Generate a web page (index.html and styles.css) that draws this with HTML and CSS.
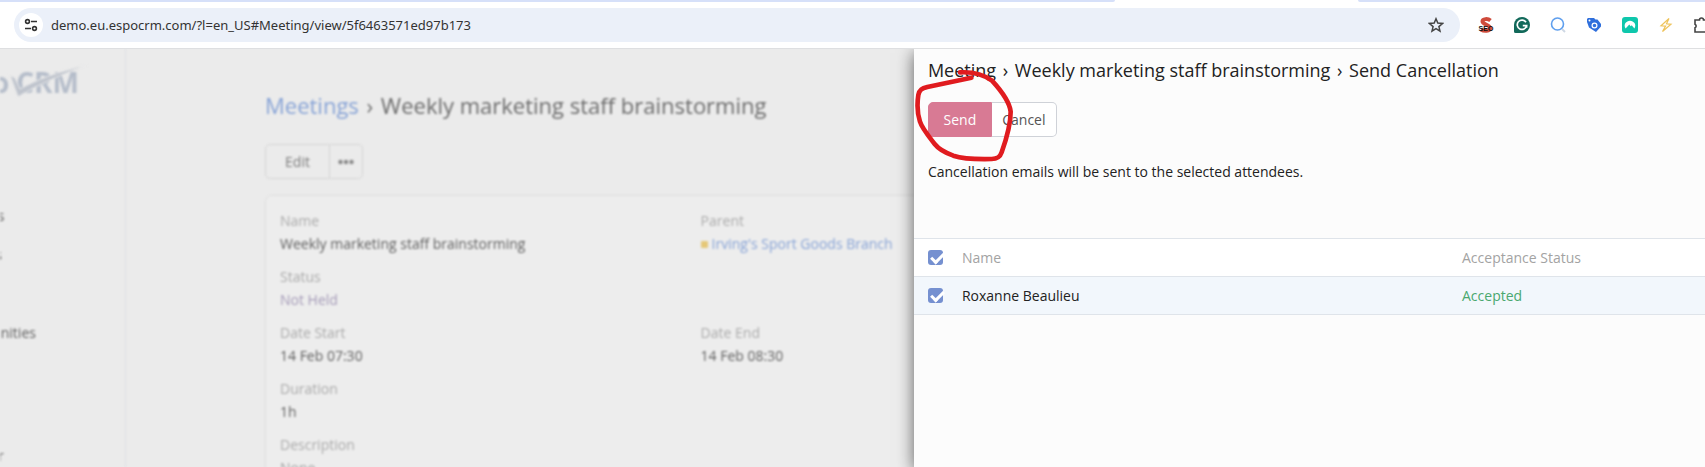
FILE: index.html
```html
<!DOCTYPE html>
<html lang="en">
<head>
    <meta charset="UTF-8">
    <meta name="viewport" content="width=device-width, initial-scale=1.0">
    <title>Weekly marketing staff brainstorming</title>
    <link rel="stylesheet" href="styles.css">
</head>
<body>
<div class="tab-strip">
    <div class="tab-before"></div>
    <div class="tab-active"></div>
    <div class="tab-after"></div>
</div>
<header class="toolbar">
    <div class="address-bar">
        <button class="site-info" type="button" aria-label="Site information">
            <svg width="14" height="14" viewBox="0 0 14 14" fill="none" stroke="#333" stroke-width="1.6">
                <circle cx="3.5" cy="3.5" r="1.9"/>
                <path d="M7 3.5h6M1 10.5h6"/>
                <circle cx="10.5" cy="10.5" r="1.9"/>
            </svg>
        </button>
        <input class="url" type="text" aria-label="Address" value="demo.eu.espocrm.com/?l=en_US#Meeting/view/5f6463571ed97b173">
        <button class="tool" type="button" aria-label="Bookmark">
            <svg width="16" height="16" viewBox="0 0 16 16" fill="none" stroke="#444" stroke-width="1.5">
                <path d="M8 1.8l1.8 4.3 4.7.4-3.6 3.1 1.1 4.6L8 11.7l-4 2.5 1.1-4.6L1.5 6.5l4.7-.4z"/>
            </svg>
        </button>
    </div>
    <div class="extensions">
        <button class="tool seo" type="button" aria-label="SEO">
            <svg class="seo-s" width="16" height="16" viewBox="0 0 16 16" fill="none" stroke="#cf4b3b" stroke-width="4">
                <path d="M12.500 3.500C10 1.500 4.500 1.500 4.500 4.500S12 7.500 12 11 6 14.500 3 12.500"/>
            </svg>
            <span class="seo-text">SEO</span>
        </button>
        <button class="tool" type="button" aria-label="Grammar">
            <svg width="16" height="16" viewBox="0 0 16 16">
                <path d="M8 0a8 8 0 0 1 0 16H1.5Q0 16 0 14.5V8a8 8 0 0 1 8-8z" fill="#12695a"/>
                <path d="M12 5.300A4.700 4.700 0 1 0 12.600 8.600H8.800M12.600 8.300v2.500" fill="none" stroke="#fff" stroke-width="1.7"/>
            </svg>
        </button>
        <button class="tool" type="button" aria-label="Search">
            <svg width="16" height="16" viewBox="0 0 16 16" fill="none">
                <path d="M12 12l3 3" stroke="#cfd8e4" stroke-width="2"/>
                <circle cx="7.5" cy="7" r="6" stroke="#5f9fee" stroke-width="1.6"/>
            </svg>
        </button>
        <button class="tool" type="button" aria-label="Tags">
            <svg width="16" height="16" viewBox="0 0 16 16">
                <path d="M2 1h6l1.500 1.500h2L15 7v2.500L10 15 3 10.500 1 5V2z" fill="#2f6fdc"/>
                <circle cx="8.500" cy="8.500" r="2.400" fill="none" stroke="#fff" stroke-width="1.200"/>
                <circle cx="3.500" cy="3.500" r="1" fill="#fff"/>
            </svg>
        </button>
        <button class="tool" type="button" aria-label="VPN">
            <svg width="16" height="16" viewBox="0 0 16 16">
                <rect width="16" height="16" rx="3" fill="#0ec7ac"/>
                <path d="M3.600 11.500C1 7.500 4.300 3.800 8 3.800s7 3.700 4.400 7.700l-2.700-3.200-1 .9L7.300 7.500z" fill="#fff"/>
            </svg>
        </button>
        <button class="tool" type="button" aria-label="Speed">
            <svg width="16" height="16" viewBox="0 0 16 16" fill="none" stroke="#eec35a" stroke-width="1.2">
                <path d="M11 1.500L3 8.800l4.600.3L4.500 14.500 13 7.300l-4.500-.5z"/>
            </svg>
        </button>
        <button class="tool" type="button" aria-label="Extensions">
            <svg width="16" height="16" viewBox="0 0 16 16" fill="none" stroke="#444" stroke-width="1.6">
                <path d="M1 3h4.500a2 2 0 0 1 4 0H13v4a2 2 0 0 1 0 4v4H1v-4.200a2 2 0 0 0 0-3.600z"/>
            </svg>
        </button>
    </div>
</header>

<div class="app">
    <div class="page">
        <aside class="sidebar">
            <div class="logo">
                <span>espo</span>
                <span>CRM</span>
                <svg class="logo-check" width="78" height="34" viewBox="0 0 78 34">
                    <path d="M1 10l5 3 5 11C28 14 52 6 78 0 52 10 28 20 9 32z" fill="#bfc4cd" stroke="#ebebeb" stroke-width="1"/>
                </svg>
            </div>
            <nav>
                <ul class="menu">
                    <li><a href="#Account">Accounts</a></li>
                    <li><a href="#Contact">Contacts</a></li>
                    <li><a href="#Lead">Leads</a></li>
                    <li><a href="#Opportunity">Opportunities</a></li>
                    <li><a href="#Case">Cases</a></li>
                    <li><a href="#Email">Emails</a></li>
                </ul>
                <ul class="menu">
                    <li><a href="#Calendar">Calendar</a></li>
                </ul>
            </nav>
        </aside>
        <main class="content">
            <h1 class="page-title"><a href="#Meeting">Meetings</a> <span class="chevron">›</span> Weekly marketing staff brainstorming</h1>
            <div class="btn-group">
                <button class="btn btn-wide" type="button">Edit</button>
                <button class="btn btn-dots" type="button" aria-label="More">
                    <svg width="16" height="6" viewBox="0 0 16 6" fill="#888">
                        <circle cx="2.5" cy="3" r="2.2"/>
                        <circle cx="8" cy="3" r="2.2"/>
                        <circle cx="13.5" cy="3" r="2.2"/>
                    </svg>
                </button>
            </div>
            <dl class="record">
                <div class="field">
                    <dt>Name</dt>
                    <dd>Weekly marketing staff brainstorming</dd>
                </div>
                <div class="field">
                    <dt>Parent</dt>
                    <dd class="parent"><span class="dot"></span><a href="#Account">Irving's Sport Goods Branch</a></dd>
                </div>
                <div class="field field-full">
                    <dt>Status</dt>
                    <dd class="not-held">Not Held</dd>
                </div>
                <div class="field">
                    <dt>Date Start</dt>
                    <dd>14 Feb 07:30</dd>
                </div>
                <div class="field">
                    <dt>Date End</dt>
                    <dd>14 Feb 08:30</dd>
                </div>
                <div class="field field-full">
                    <dt>Duration</dt>
                    <dd>1h</dd>
                </div>
                <div class="field field-full">
                    <dt>Description</dt>
                    <dd class="none">None</dd>
                </div>
            </dl>
        </main>
    </div>

    <section class="modal" role="dialog" aria-labelledby="modal-title">
        <h2 class="modal-title" id="modal-title">Meeting <span class="chevron">›</span> Weekly marketing staff brainstorming <span class="chevron">›</span> Send Cancellation</h2>
        <div class="btn-group modal-buttons">
            <button class="btn btn-danger" type="button">Send</button>
            <button class="btn btn-cancel" type="button">Cancel</button>
        </div>
        <p class="modal-text">Cancellation emails will be sent to the selected attendees.</p>
        <table class="attendees">
            <thead>
                <tr>
                    <th class="col-check"><input type="checkbox" aria-label="Select all" checked></th>
                    <th>Name</th>
                    <th class="col-status">Acceptance Status</th>
                </tr>
            </thead>
            <tbody>
                <tr>
                    <td class="col-check"><input type="checkbox" id="attendee" checked></td>
                    <td><label for="attendee">Roxanne Beaulieu</label></td>
                    <td class="col-status accepted">Accepted</td>
                </tr>
            </tbody>
        </table>
        <svg class="marker" width="104" height="100" viewBox="42 81 312 300">
            <path d="M180 97C215 95 250 103 276 122C298 146 328 180 332 215C332 255 318 300 305 337C300 352 292 357 275 357C235 358 190 357 160 347C135 338 118 330 104 312C88 291 66 265 60 245C50 215 52 185 55 165C58 149 66 145 82 141L214 113"/>
        </svg>
    </section>
</div>
</body>
</html>
```
FILE: styles.css
```css
* {
    box-sizing: border-box;
}

body {
    margin: 0;
    height: 100vh;
    display: flex;
    flex-direction: column;
    overflow: hidden;
    font-family: "Open Sans", "Noto Sans", sans-serif;
    font-size: 14px;
    line-height: 20px;
    color: #222;
    background-color: #fff;
}

a {
    color: inherit;
    text-decoration: none;
}

button {
    font: inherit;
    cursor: pointer;
}

svg {
    display: block;
}

/* Browser bar */
.tab-strip {
    display: flex;
    height: 2px;
}

.tab-before {
    flex: 1115;
    background-color: #d6e0f9;
    border-bottom-right-radius: 2px;
}

.tab-active {
    flex: 243;
}

.tab-after {
    flex: 347;
    background-color: #d6e0f9;
    border-bottom-left-radius: 2px;
}

.toolbar {
    display: flex;
    align-items: center;
    gap: 18px;
    height: 47px;
    padding: 0 0 1px 14px;
    border-bottom: 1px solid #dedfe1;
    overflow: hidden;
}

.address-bar {
    flex: 1;
    display: flex;
    align-items: center;
    height: 34px;
    padding: 0 16px 0 5px;
    border-radius: 17px;
    background-color: #ebf0f9;
}

.site-info {
    display: flex;
    align-items: center;
    justify-content: center;
    width: 24px;
    height: 24px;
    padding: 0;
    border: none;
    border-radius: 50%;
    background-color: #fff;
}

.url {
    flex: 1;
    padding: 0 8px;
    border: none;
    outline: none;
    background: none;
    font-family: "Noto Sans", sans-serif;
    font-size: 13px;
    color: #333;
}

.extensions {
    display: flex;
    gap: 20px;
    width: 227px;
}

.tool {
    flex: none;
    width: 16px;
    height: 16px;
    padding: 0;
    border: none;
    background: none;
}

.seo {
    position: relative;
    display: flex;
    align-items: flex-end;
    justify-content: center;
}

.seo-s {
    position: absolute;
    top: 0;
    left: 0;
}

.seo-text {
    position: relative;
    font-family: "Liberation Sans", sans-serif;
    font-size: 7px;
    font-weight: bold;
    line-height: 9px;
    color: #111;
}

/* Record page behind the modal */
.app {
    position: relative;
    flex: 1;
    min-height: 0;
    overflow: hidden;
    background-color: #ebebeb;
}

.page {
    display: flex;
    height: 100%;
    filter: blur(0.8px);
}

.sidebar {
    flex: none;
    width: 126px;
    border-right: 1px solid #dfe1e6;
    overflow: hidden;
}

.logo {
    position: relative;
    display: flex;
    justify-content: flex-end;
    gap: 7px;
    height: 86px;
    margin-right: 46px;
    padding-top: 15px;
    font-size: 28px;
    font-weight: bold;
    line-height: 36px;
    color: #b5bdca;
}

.logo-check {
    position: absolute;
    top: 16px;
    right: -8px;
}

.menu {
    margin: 0 0 6px -55px;
    padding: 0;
    list-style: none;
    line-height: 39px;
    color: #5f5f5f;
}

nav {
    padding-top: 61px;
}

.content {
    flex: 1;
    padding: 41px 0 0 139px;
}

.chevron {
    margin: 0 2px;
}

.page-title {
    margin: 0 0 24px;
    font-size: 22px;
    font-weight: normal;
    line-height: 30px;
    color: #6c6c6c;
}

.page-title a,
.parent a {
    color: #87a3d6;
}

.btn-group {
    display: flex;
}

.btn {
    height: 35px;
    padding: 0;
    border: 1px solid #d6d6d6;
    background-color: transparent;
    color: #7c7c7c;
}

.btn:first-child {
    border-radius: 5px 0 0 5px;
}

.btn:last-child {
    border-left: none;
    border-radius: 0 5px 5px 0;
}

.btn-wide {
    width: 65px;
}

.btn-dots {
    display: flex;
    align-items: center;
    justify-content: center;
    width: 33px;
}

.record {
    display: grid;
    grid-template-columns: 1fr 1fr;
    row-gap: 12px;
    width: 60.5%;
    margin: 16px 0 0;
    padding: 15px 14px;
    border: 1px solid #dedede;
    border-radius: 7px;
    background-color: #ededed;
}

.field-full {
    grid-column: 1 / -1;
}

.field dt {
    line-height: 20px;
    color: #ababab;
}

.field dd {
    margin: 0;
    padding-top: 1px;
    line-height: 23px;
    color: #5f5f5f;
}

.field .not-held {
    color: #a59bb8;
}

.field .none {
    color: #a5a5a5;
}

.dot {
    display: inline-block;
    width: 7px;
    height: 7px;
    margin-right: 4px;
    vertical-align: 1px;
    border-radius: 1px;
    background-color: #e5c878;
}

/* Modal */
.modal {
    position: absolute;
    top: 0;
    right: 0;
    bottom: 0;
    width: 46.4%;
    background-color: #fcfcfc;
    box-shadow: 0 4px 16px rgba(0, 0, 0, 0.6);
}

.modal-title {
    margin: 0;
    padding: 8px 14px 0;
    font-size: 18px;
    font-weight: normal;
    line-height: 26px;
}

.modal-buttons {
    padding: 19px 14px 0;
}

.btn-danger {
    width: 64px;
    border-color: #d87a94;
    background-color: #d87a94;
    color: #fff;
}

.btn-cancel {
    width: 65px;
    border-color: #cfd2d8;
    background-color: #fff;
    color: #555;
}

.modal-text {
    margin: 25px 14px 56px;
}

.attendees {
    width: 100%;
    border-collapse: collapse;
    table-layout: fixed;
    background-color: #fff;
}

.attendees tr {
    height: 38px;
    border-top: 1px solid #dfe4ea;
    border-bottom: 1px solid #dfe4ea;
}

.attendees th,
.attendees td {
    padding: 0;
    text-align: left;
    font-weight: normal;
}

.attendees th {
    color: #a3a3a3;
}

.attendees tbody {
    background-color: #f2f7fc;
}

.attendees .col-check {
    width: 48px;
    padding-left: 14px;
}

.attendees .col-status {
    width: 243px;
}

.attendees .accepted {
    color: #4aa86f;
}

.attendees input {
    display: block;
    appearance: none;
    width: 15px;
    height: 15px;
    margin: 0;
    border-radius: 3px;
    background-color: #7590d0;
}

.attendees input:checked::before {
    content: "";
    display: block;
    width: 10px;
    height: 5px;
    margin: 3px 0 0 3px;
    border: solid #fff;
    border-width: 0 0 3px 3px;
    transform: rotate(-45deg);
}

/* Hand-drawn circle round the Send button */
.marker {
    position: absolute;
    top: 18px;
    left: 0;
    fill: none;
    stroke: #e01b1f;
    stroke-width: 14;
    stroke-linecap: round;
    stroke-linejoin: round;
    pointer-events: none;
}
```
